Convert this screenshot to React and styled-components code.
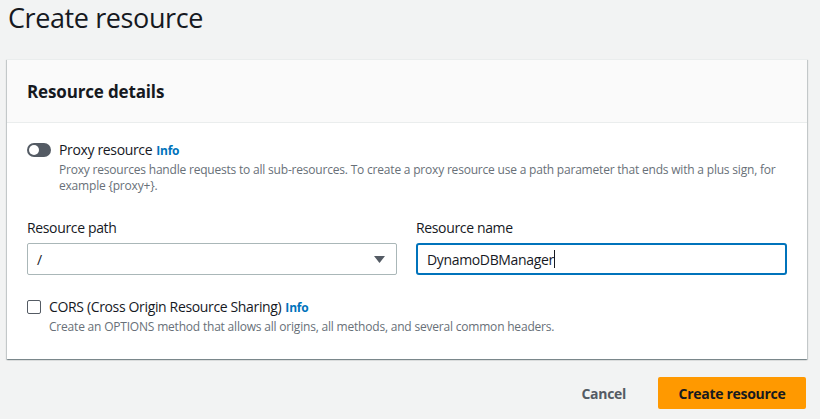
import React from "react";
import styled, { createGlobalStyle } from "styled-components";

const Global = createGlobalStyle`
  html, body { margin: 0; padding: 0; background: #f2f3f3; }
  body { font-family: "Open Sans", "Noto Sans", Arial, sans-serif; color: #16191f; letter-spacing: -0.35px; }
  * { box-sizing: border-box; }
`;

const Page = styled.div`
  width: 820px;
  height: 419px;
  padding: 0 13px 0 7px;
  display: flex;
  flex-direction: column;
  overflow: hidden;
`;

const Title = styled.h1`
  margin: 0;
  padding: 0 0 0 1px;
  height: 59px;
  font-size: 27px;
  font-weight: 400;
  line-height: 36px;
  color: #16191f;
  letter-spacing: -0.4px;
`;

const Card = styled.section`
  background: #fff;
  box-shadow: 0 1px 1px 0 rgba(0, 28, 36, 0.3), 1px 1px 1px 0 rgba(0, 28, 36, 0.15),
    -1px 1px 1px 0 rgba(0, 28, 36, 0.15);
  border-top: 1px solid #eaeded;
  display: flex;
  flex-direction: column;
`;

const CardHeader = styled.div`
  background: #fafafa;
  border-bottom: 1px solid #eaeded;
  height: 63px;
  padding: 0 20px;
  display: flex;
  align-items: center;
`;

const CardTitle = styled.h2`
  margin: 0;
  font-size: 17px;
  font-weight: 700;
  letter-spacing: -0.15px;
  color: #16191f;
`;

const CardBody = styled.div`
  padding: 19px 20px 24px 20px;
  display: flex;
  flex-direction: column;
`;

const OptionRow = styled.div`
  display: flex;
  align-items: flex-start;
  gap: 8px;
  margin-top: ${(p) => p.$mt || 0}px;
`;

const Toggle = styled.span`
  flex: none;
  width: 24px;
  height: 14px;
  margin-top: 1px;
  border-radius: 7px;
  background: #545b64;
  position: relative;
  &::after {
    content: "";
    position: absolute;
    left: 2px;
    top: 2px;
    width: 10px;
    height: 10px;
    border-radius: 50%;
    background: #fff;
  }
`;

const Checkbox = styled.span`
  flex: none;
  width: 14px;
  height: 14px;
  margin-top: 1px;
  border: 1px solid #545b64;
  border-radius: 2px;
  background: #fff;
`;

const OptionText = styled.div`
  display: flex;
  flex-direction: column;
`;

const OptionLabel = styled.div`
  font-size: 14px;
  line-height: 16px;
  color: #16191f;
`;

const Info = styled.a`
  font-size: 12px;
  font-weight: 700;
  color: #0073bb;
  margin-left: 4px;
  letter-spacing: -0.2px;
  text-decoration: none;
`;

const Desc = styled.div`
  margin-top: 3px;
  font-size: 12px;
  line-height: 16px;
  letter-spacing: -0.2px;
  color: #687078;
  max-width: 725px;
`;

const FieldGrid = styled.div`
  display: grid;
  grid-template-columns: 370px 371px;
  column-gap: 19px;
  margin-top: 24px;
`;

const Field = styled.div`
  display: flex;
  flex-direction: column;
`;

const Label = styled.label`
  font-size: 14px;
  line-height: 20px;
  color: #16191f;
  margin-bottom: 5px;
`;

const SelectBox = styled.div`
  height: 32px;
  border: 1px solid #aab7b8;
  border-radius: 2px;
  display: flex;
  align-items: center;
  justify-content: space-between;
  padding: 0 11px 0 9px;
  font-size: 14px;
  color: #16191f;
`;

const TextInput = styled.div`
  height: 32px;
  border: 2px solid #0073bb;
  border-radius: 3px;
  display: flex;
  align-items: center;
  padding: 0 9px;
  font-size: 14px;
  color: #16191f;
`;

const Caret = styled.span`
  display: inline-block;
  width: 1px;
  height: 18px;
  background: #16191f;
`;

const Actions = styled.div`
  display: flex;
  justify-content: flex-end;
  align-items: center;
  gap: 12px;
  margin-top: 18px;
  padding-right: 1px;
`;

const LinkButton = styled.button`
  border: none;
  background: transparent;
  font-family: inherit;
  letter-spacing: -0.3px;
  font-size: 14px;
  font-weight: 700;
  color: #545b64;
  padding: 0 20px;
  height: 32px;
`;

const PrimaryButton = styled.button`
  border: none;
  background: #ff9900;
  border-radius: 2px;
  font-family: inherit;
  letter-spacing: -0.3px;
  font-size: 14px;
  font-weight: 700;
  color: #16191f;
  height: 32px;
  width: 148px;
`;

const proxyDesc =
  "Proxy resources handle requests to all sub-resources. To create a proxy resource use a path parameter that ends with a plus sign, for example {proxy+}.";

export default function App() {
  return (
    <>
      <Global />
      <Page>
        <Title>Create resource</Title>
        <Card>
          <CardHeader>
            <CardTitle>Resource details</CardTitle>
          </CardHeader>
          <CardBody>
            <OptionRow>
              <Toggle />
              <OptionText>
                <OptionLabel>
                  Proxy resource<Info>Info</Info>
                </OptionLabel>
                <Desc>{proxyDesc}</Desc>
              </OptionText>
            </OptionRow>
            <FieldGrid>
              <Field>
                <Label>Resource path</Label>
                <SelectBox>
                  <span>/</span>
                  <svg width="11" height="7" viewBox="0 0 11 7">
                    <path d="M0 0h11L5.5 7z" fill="#545b64" />
                  </svg>
                </SelectBox>
              </Field>
              <Field>
                <Label>Resource name</Label>
                <TextInput>
                  DynamoDBManager<Caret />
                </TextInput>
              </Field>
            </FieldGrid>
            <OptionRow $mt={24}>
              <Checkbox />
              <OptionText>
                <OptionLabel>
                  CORS (Cross Origin Resource Sharing)<Info>Info</Info>
                </OptionLabel>
                <Desc>Create an OPTIONS method that allows all origins, all methods, and several common headers.</Desc>
              </OptionText>
            </OptionRow>
          </CardBody>
        </Card>
        <Actions>
          <LinkButton>Cancel</LinkButton>
          <PrimaryButton>Create resource</PrimaryButton>
        </Actions>
      </Page>
    </>
  );
}
